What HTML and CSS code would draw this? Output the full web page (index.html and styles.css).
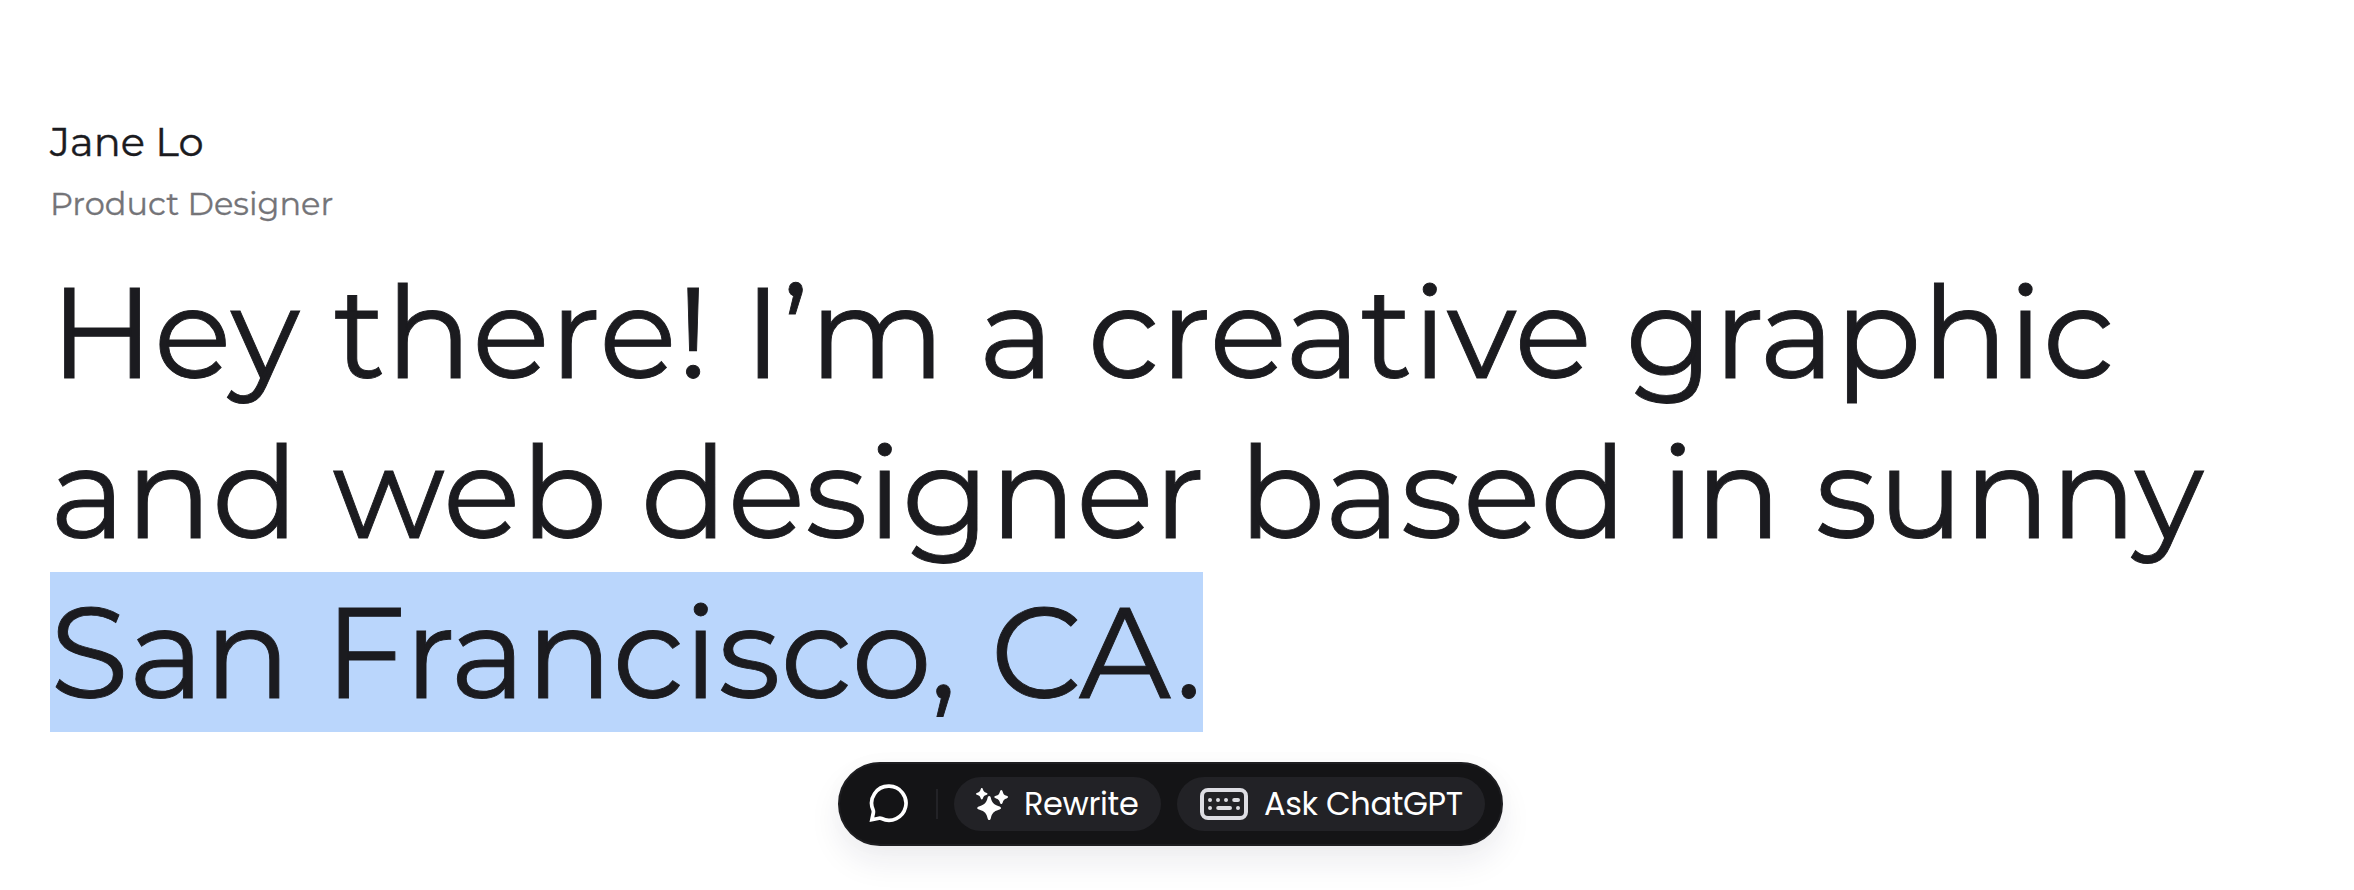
FILE: index.html
```
<!DOCTYPE html>
<html lang="en">
<head>
<meta charset="utf-8">
<title>Jane Lo</title>
<link rel="stylesheet" href="styles.css">
</head>
<body>
<main class="profile">
  <p class="name">Jane Lo</p>
  <p class="role">Product Designer</p>
  <h1 class="headline">Hey there! I’m a creative graphic<br>and web designer based in sunny<br><span class="selected">San Francisco, CA.</span></h1>
</main>
<div class="toolbar">
  <button class="comment" aria-label="Comment">
    <svg width="40" height="40" viewBox="0 0 40 40" fill="none" stroke="#fff" stroke-width="3.7" stroke-linejoin="miter"><path d="M20.3 2.2A17 17 0 1 1 12.6 34.5Q11.3 33.9 10 34.2L2.9 35.7L4.3 29Q4.6 27.6 4.2 26.3A17 17 0 0 1 20.3 2.2Z"/></svg>
  </button>
  <span class="divider"></span>
  <button class="pill rewrite">
    <svg width="32" height="32" viewBox="0 0 32 32" fill="#fff"><path d="M13.2 8C14.2 8 14.5 8.8 14.8 9.8C16 14.5 17.4 16.5 22.8 18.2C24 18.6 25 19 25 20C25 21 24 21.4 22.8 21.8C17.4 23.5 16 25.5 14.8 30.2C14.5 31.2 14.2 32 13.2 32C12.2 32 11.9 31.2 11.6 30.2C10.4 25.5 9 23.5 3.6 21.8C2.4 21.4 1.2 21 1.2 20C1.2 19 2.4 18.6 3.6 18.2C9 16.5 10.4 14.5 11.6 9.8C11.9 8.8 12.2 8 13.2 8Z"/><path d="M5.8 0C6.6 0 6.7 .7 7 1.5C7.6 3.5 8.2 4.1 10.2 4.7C11 5 11.5 5.1 11.5 5.8C11.5 6.5 11 6.6 10.2 6.9C8.2 7.5 7.6 8.1 7 10.1C6.7 10.9 6.6 11.5 5.8 11.5C5 11.5 4.9 10.9 4.6 10.1C4 8.1 3.4 7.5 1.4 6.9C.6 6.6 0 6.5 0 5.8C0 5.1 .6 5 1.4 4.7C3.4 4.1 4 3.5 4.6 1.5C4.9 .7 5 0 5.8 0Z"/><path d="M25.3 2C26.1 2 26.4 2.8 26.7 3.7C27.3 6.2 28.2 7.1 30.6 7.8C31.5 8.1 32 8.3 32 9.1C32 9.9 31.5 10.1 30.6 10.4C28.2 11.1 27.3 12 26.7 14.5C26.4 15.4 26.1 16 25.3 16C24.5 16 24.2 15.4 23.9 14.5C23.3 12 22.4 11.1 20 10.4C19.1 10.1 18.3 9.9 18.3 9.1C18.3 8.3 19.1 8.1 20 7.8C22.4 7.1 23.3 6.2 23.9 3.7C24.2 2.8 24.5 2 25.3 2Z"/></svg>
    <span>Rewrite</span>
  </button>
  <button class="pill ask">
    <svg width="48" height="32" viewBox="0 0 48 32" fill="none" stroke="#dddde3" stroke-width="4" stroke-linecap="round"><rect x="2" y="2" width="44" height="28" rx="6"/><path d="M10 12h.01M18 12h.01M26 12h.01M34.2 12h3.8M10 20h.01M18.2 20h11.8M38 20h.01"/></svg>
    <span>Ask ChatGPT</span>
  </button>
</div>
</body>
</html>
```
FILE: styles.css
```
* {
  box-sizing: border-box;
}

body {
  margin: 0;
  min-height: 890px;
  background: #fff;
  color: #1b1b1f;
  font-family: Montserrat, Inter, sans-serif;
  -webkit-font-smoothing: antialiased;
}

.profile {
  padding: 113px 50px 0;
}

.name,
.role,
.headline {
  margin: 0;
  font-weight: 400;
  white-space: nowrap;
}

.name {
  font-size: 40px;
  line-height: 58px;
  -webkit-text-stroke: .4px currentColor;
}

.role {
  margin-top: 9px;
  font-size: 32px;
  line-height: 48px;
  color: #747478;
  -webkit-text-stroke: .3px currentColor;
}

.headline {
  margin-top: 24px;
  font-size: 128px;
  line-height: 160px;
  letter-spacing: .03px;
  -webkit-text-stroke: .9px currentColor;
}

.selected {
  display: inline-block;
  min-width: 1153px;
  background: #bad6fc;
}

.toolbar {
  display: flex;
  align-items: center;
  width: 665px;
  height: 84px;
  margin: 30px 0 0 838px;
  padding: 0 16px 0 32px;
  border: 2px solid #1e1e21;
  border-radius: 42px;
  background: #141416;
  box-shadow: 0 16px 32px rgba(30, 30, 60, .08), 0 0 24px rgba(30, 30, 60, .02);
}

button {
  padding: 0;
  border: 0;
  background: none;
  color: #fff;
  font: 400 32px/54px Poppins, Inter, sans-serif;
  letter-spacing: -.35px;
}

svg {
  display: block;
  flex: none;
}

.comment {
  margin-left: -3px;
}

.divider {
  flex: none;
  width: 2px;
  height: 30px;
  margin: 0 16px 0 27px;
  background: #232327;
}

.pill {
  display: flex;
  flex: none;
  align-items: center;
  height: 54px;
  border-radius: 27px;
  background: #222226;
  white-space: nowrap;
}

.rewrite {
  width: 207px;
  padding-left: 22px;
  gap: 16px;
}

.ask {
  width: 308px;
  margin-left: 16px;
  padding-left: 23px;
  gap: 16px;
}
```
